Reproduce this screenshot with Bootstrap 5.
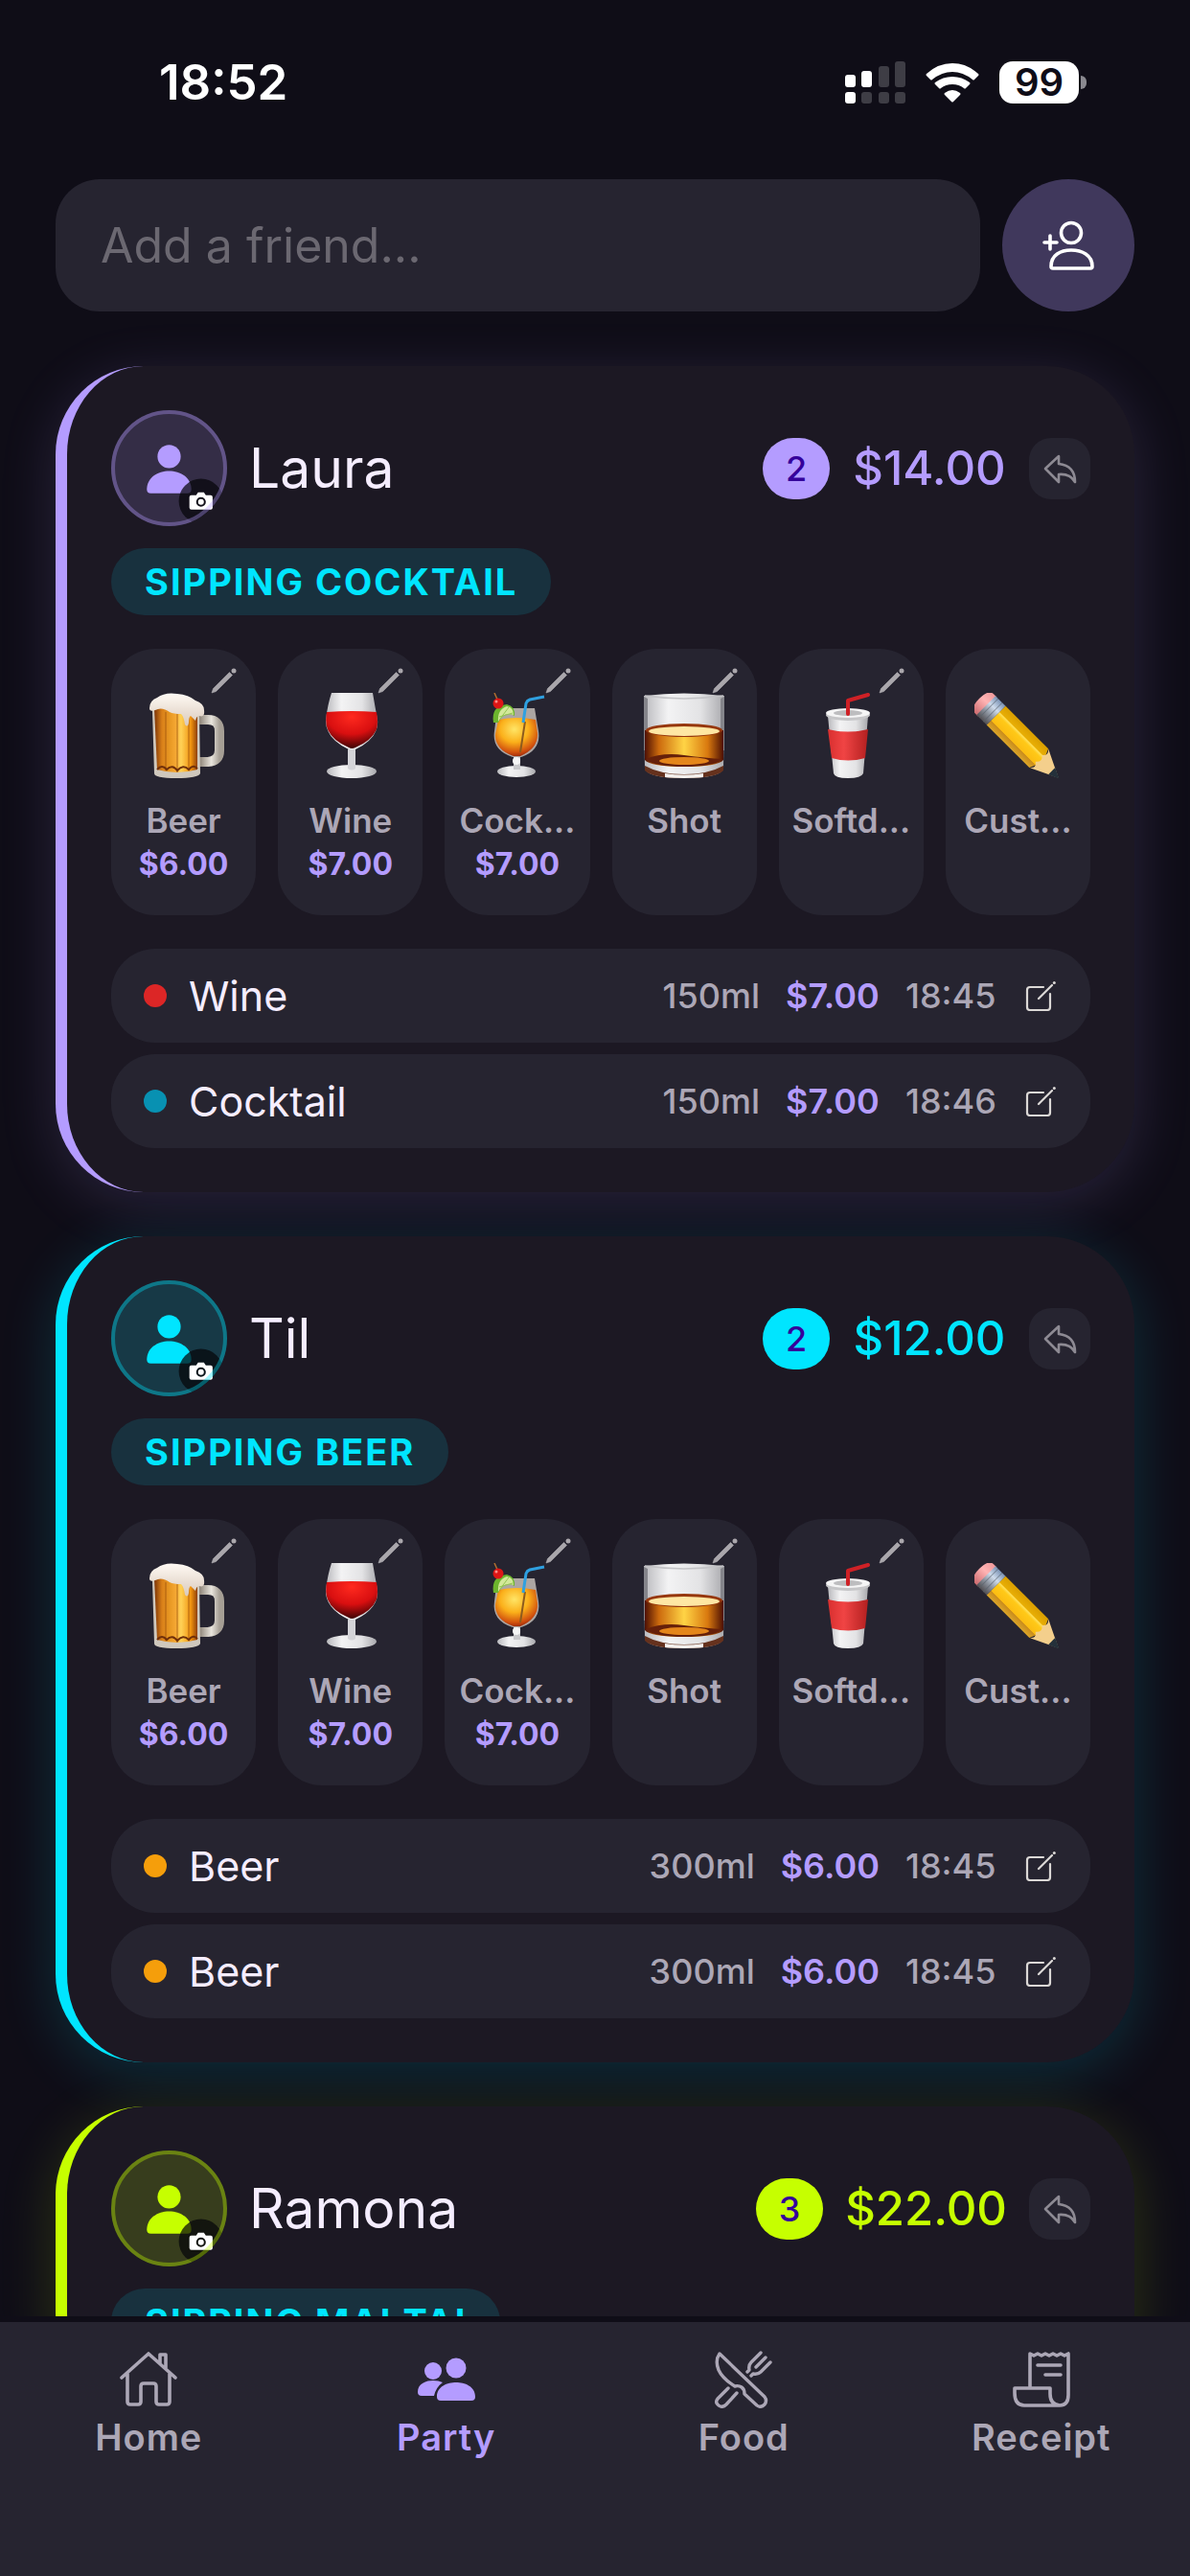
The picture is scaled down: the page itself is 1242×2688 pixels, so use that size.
<!DOCTYPE html>
<html lang="en">
<head>
<meta charset="utf-8">
<meta name="viewport" content="width=device-width, initial-scale=1">
<title>Party</title>
<link rel="stylesheet" href="https://cdn.jsdelivr.net/npm/bootstrap@5.3.0/dist/css/bootstrap.min.css">
<style>
:root{--page:#0f0d17;--surface:#1c1823;--raised:#262430;--muted:#aca7b6;--bright:#f5edff;--violet:#b49cff;--cyan:#00e5ff;--lime:#c6ff00}
body{background:var(--page);color:var(--bright);font-family:Inter,"Noto Sans",sans-serif}
svg{display:block;flex:none}
.app-status{padding:54px 108px 22px 166px;color:#fff}
.clock{font-size:51px;line-height:64px;font-weight:600}
.status-icons{gap:21px}
.battery{width:83px;height:44px;border-radius:14px;background:#fff;color:var(--page);font-size:40px;line-height:44px;font-weight:600;text-align:center}
.battery-cap{width:6px;height:14px;margin-left:2px;border-radius:0 6px 6px 0;background:#8a8990}
.app-main{padding:47px 58px 0;min-height:0}
.gap-m{gap:23px}
.gap-s{gap:12px}
.friend-input,.friend-input:focus{height:138px;border:0;border-radius:46px;padding:0 47px;background:var(--raised);color:var(--bright);font-size:50px;box-shadow:none}
.friend-input::placeholder{color:#6b6871;opacity:1}
.add-btn{width:138px;height:138px;background:#40385c;color:#fff;flex:none}
.guest-list{gap:46px;margin-top:57px}
.guest{--accent:var(--violet);--glow:180,156,255;border-left:12px solid var(--accent);border-radius:92px;background:var(--surface);padding:46px;box-shadow:0 12px 60px rgba(var(--glow),.16)}
.guest-cyan{--accent:var(--cyan);--glow:0,229,255}
.guest-lime{--accent:var(--lime);--glow:198,255,0}
.avatar-btn{color:var(--accent);border-radius:50%}
.guest-name{font-size:57px;line-height:64px;font-weight:400;color:var(--bright)}
.count{min-width:70px;height:64px;border-radius:32px;background:var(--accent);color:#35009b;font-size:36px;line-height:64px;font-weight:500;text-align:center}
.total{min-width:162px;font-size:49px;line-height:64px;font-weight:500;color:var(--accent);text-align:center}
.reply-btn{border-radius:23px;background:var(--raised);color:#8d8a93}
.chip-row{margin-top:23px}
.sip-chip{border-radius:35px;padding:0 35px;background:#18313e;color:var(--cyan);font-size:38px;line-height:70px;font-weight:700;letter-spacing:2px;text-transform:uppercase}
.stack{gap:35px;margin-top:35px}
.tile{flex:1 1 0;min-width:0;min-height:278px;border-radius:46px;background:var(--raised);padding-top:46px;color:var(--muted)}
.tile-name{margin-top:20px;font-size:35px;line-height:46px;font-weight:600}
.tile-price{font-size:32px;line-height:46px;font-weight:700;color:var(--violet)}
.tile-edit{top:20px;right:20px;color:#aaa7ac}
.drink{min-height:98px;border-radius:46px;background:var(--raised);padding:0 36px 0 34px;font-size:36px;line-height:46px;font-weight:500;color:var(--muted)}
.drink-name{font-size:43px;font-weight:400;color:var(--bright)}
.spot{width:24px;height:24px;border-radius:50%;flex:none}
.spot-red{background:#dc2626}
.spot-teal{background:#0891b2}
.spot-amber{background:#f59e0b}
.cost{min-width:98px;font-weight:600;color:var(--violet)}
.time-col{min-width:98px}
.drink-meta{gap:27px}
.edit-btn{color:#dbd8d6}
.tab-bar{border-top:6px solid var(--page);background:var(--raised);padding:30px 0 122px}
.tab-link{color:var(--muted);font-size:38px;line-height:46px;font-weight:600;letter-spacing:1px;gap:7px}
.tab-link.active{color:var(--violet)}
</style>
</head>
<body>
<svg class="position-absolute" width="0" height="0" aria-hidden="true">
<defs>
<linearGradient id="gBeer"><stop offset="0" stop-color="#7c3407"/><stop offset=".18" stop-color="#d98019"/><stop offset=".35" stop-color="#e79722"/><stop offset=".5" stop-color="#f5a833"/><stop offset=".62" stop-color="#ffd257"/><stop offset=".85" stop-color="#f0930f"/><stop offset="1" stop-color="#8f3f08"/></linearGradient>
<linearGradient id="gFoam" x2="0" y2="1"><stop offset="0" stop-color="#fffaf4"/><stop offset="1" stop-color="#d9c9bb"/></linearGradient>
<linearGradient id="gHandle"><stop offset="0" stop-color="#8d8377"/><stop offset=".6" stop-color="#e9e5dd"/><stop offset="1" stop-color="#a69f95"/></linearGradient>
<linearGradient id="gGlass"><stop offset="0" stop-color="#b9b9bd"/><stop offset=".3" stop-color="#f3f3f4"/><stop offset=".7" stop-color="#e3e3e5"/><stop offset="1" stop-color="#a9a9ad"/></linearGradient>
<radialGradient id="gWine" cx=".5" cy=".15" r=".85"><stop offset="0" stop-color="#ff2a1f"/><stop offset=".55" stop-color="#d90f10"/><stop offset="1" stop-color="#3d0305"/></radialGradient>
<radialGradient id="gTropic" cx=".45" cy=".3" r=".75"><stop offset="0" stop-color="#ffe566"/><stop offset=".45" stop-color="#fbb01a"/><stop offset=".8" stop-color="#d2520e"/><stop offset="1" stop-color="#8f1d08"/></radialGradient>
<linearGradient id="gWhisky"><stop offset="0" stop-color="#4e1003"/><stop offset=".18" stop-color="#cc6a0d"/><stop offset=".5" stop-color="#ffd445"/><stop offset=".8" stop-color="#d9790f"/><stop offset="1" stop-color="#4e1003"/></linearGradient>
<linearGradient id="gRed"><stop offset="0" stop-color="#d92f2f"/><stop offset=".4" stop-color="#f04444"/><stop offset="1" stop-color="#b32020"/></linearGradient>
<linearGradient id="gWood" x2="0" y2="1"><stop offset="0" stop-color="#d99e00"/><stop offset=".3" stop-color="#e8ae05"/><stop offset=".34" stop-color="#ffe05a"/><stop offset=".44" stop-color="#ffc918"/><stop offset=".75" stop-color="#fcbd12"/><stop offset=".78" stop-color="#c98c1c"/><stop offset="1" stop-color="#dba62a"/></linearGradient>
<linearGradient id="gFerrule" x2="0" y2="1"><stop offset="0" stop-color="#7b93b5"/><stop offset=".35" stop-color="#cfdcec"/><stop offset=".65" stop-color="#8d949f"/><stop offset="1" stop-color="#4f4c50"/></linearGradient>
<linearGradient id="gRubber" x2="0" y2="1"><stop offset="0" stop-color="#f09a9c"/><stop offset=".4" stop-color="#ffb4b4"/><stop offset="1" stop-color="#cc6a6e"/></linearGradient>
<clipPath id="cFace"><circle cx="60" cy="60" r="60"/></clipPath>
</defs>
<symbol id="avatar" viewBox="0 0 120 120">
<circle cx="60" cy="60" r="60" fill="currentColor" fill-opacity=".16"/>
<g fill="currentColor"><circle cx="60" cy="48" r="12"/><path d="M37 82C37 70 48 63 60 63s23 7 23 19q0 4-4 4H41q-4 0-4-4z"/></g>
<circle cx="93" cy="94" r="23" fill="#06060a" fill-opacity=".72" clip-path="url(#cFace)"/>
<path fill="#fff" fill-rule="evenodd" d="M83 88h5l2-3h6l2 3h5q2 0 2 2v11q0 2-2 2H83q-2 0-2-2V90q0-2 2-2zM93 90a5 5 0 1 0 0 10a5 5 0 1 0 0-10zm0 2a3 3 0 1 1 0 6a3 3 0 1 1 0-6z"/>
<circle cx="60" cy="60" r="58" fill="none" stroke="currentColor" stroke-opacity=".36" stroke-width="4"/>
</symbol>
<symbol id="reply" viewBox="0 0 64 64"><path d="M31 19L17 32L31 46V38Q43 37 48 46Q48 29 31 27Z" fill="none" stroke="currentColor" stroke-width="2.6" stroke-linejoin="round"/></symbol>
<symbol id="pen" viewBox="0 0 27 27"><path d="M19.500 4.500L22.500 7.500L5.500 24.500L1 26L2.500 21.500Z" fill="currentColor" stroke="currentColor" stroke-width=".6" stroke-linejoin="round"/><circle cx="24" cy="3" r="2.500" fill="currentColor"/></symbol>
<symbol id="edit" viewBox="0 0 32 32"><path d="M19 7H5Q2 7 2 10V28Q2 31 5 31H23Q26 31 26 28V14M14 19L28 5" fill="none" stroke="currentColor" stroke-width="2.2" stroke-linecap="round"/><circle cx="30.300" cy="2.500" r="1.500" fill="currentColor"/></symbol>
<symbol id="beer" viewBox="0 0 90 90">
<path d="M61 28H70Q82 28 82 40V60Q82 71 70 72H61" fill="none" stroke="url(#gHandle)" stroke-width="10"/>
<path d="M12 18H61L62 84Q60 89 37 89T14 84Z" fill="#cfc8bd"/>
<path d="M14 16H59V80Q37 86 17 80Z" fill="url(#gBeer)"/>
<path d="M26 20V81M38 20V83M50 20V81" stroke="#9a4e08" stroke-opacity=".5" stroke-width="1.500"/>
<path d="M17 80Q22 74 27 80Q33 74 38 81Q44 74 50 80Q55 74 59 79" fill="none" stroke="#70300a" stroke-width="2"/>
<path d="M9 16Q9 8 17 5Q25-1 38 1Q50 2 57 8Q66 11 66 18Q67 26 61 24Q58 24 57 29Q54 26 52 24Q50 25 50 31Q49 37 46 33Q45 25 42 22Q34 22 30 20Q22 14 15 18Q9 20 9 16Z" fill="url(#gFoam)"/>
</symbol>
<symbol id="wine" viewBox="0 0 90 90">
<path d="M25 0H68Q70 12 73 28Q75 47 50 59H43Q18 47 19 28Q21 12 25 0Z" fill="url(#gGlass)"/>
<path d="M20 20Q46 18 72 20Q74 31 72 38Q67 50 50 57Q46 59 43 57Q26 50 21 38Q18 31 20 20Z" fill="url(#gWine)"/>
<ellipse cx="46" cy="82" rx="26" ry="7" fill="url(#gGlass)"/><path d="M42 59H50V79Q46 82 42 79Z" fill="#d4d4d8"/>
</symbol>
<symbol id="cocktail" viewBox="0 0 90 90">
<path d="M24 16H63L67 40Q70 60 49 67H40Q18 60 21 40Z" fill="#d9d2c9" fill-opacity=".75"/>
<path d="M25 28Q45 24 64 28L66 42Q67 58 48 66H41Q21 59 22 43Z" fill="url(#gTropic)"/>
<path d="M48 62L53 30" stroke="#8d5b1d" stroke-width="2"/><path d="M51 31L54 11Q55 8 58 7L73 4" fill="none" stroke="#2fa0e0" stroke-width="3"/>
<path d="M20 31Q17 14 34 12Q43 14 42 24Q32 18 25 31Z" fill="#6cb52d"/><path d="M25 30Q24 17 34 14Q41 15 41 23Q31 19 25 30Z" fill="#d3e89a"/><path d="M27 27L36 15M26 25L40 21" stroke="#93c552" stroke-width="1"/>
<path d="M21 0L25 9" stroke="#b26f30" stroke-width="1.500"/><circle cx="25" cy="11" r="5.500" fill="#dd1616"/><circle cx="23" cy="9" r="1.500" fill="#ff8d87"/>
<ellipse cx="44" cy="82" rx="20" ry="6" fill="url(#gGlass)"/><path d="M41 67H48V80H41Z" fill="#c9c9cc"/><circle cx="44" cy="71" r="4" fill="#f5f5f5"/>
</symbol>
<symbol id="shot" viewBox="0 0 90 90">
<path d="M3 3Q45-2 87 3L86 80Q80 89 45 89T4 80Z" fill="url(#gGlass)"/><path d="M3 4V60H7V6ZM83 6V60H87V4Z" fill="#85858b"/>
<path d="M4 39H86V70Q80 77 45 77T4 70Z" fill="url(#gWhisky)"/><path d="M5 69Q22 62 45 65T85 69Q77 77 45 77T5 69Z" fill="#66200a"/><ellipse cx="45" cy="71" rx="26" ry="4" fill="#e4861b"/>
<ellipse cx="45" cy="39" rx="40" ry="7" fill="#96370d"/><ellipse cx="45" cy="40" rx="37" ry="5" fill="#fee7a4"/>
<path d="M4 76Q20 85 45 85T86 76V81Q78 89 45 89T4 81Z" fill="#65311d"/><path d="M25 84Q45 87 65 84V88Q45 90 25 88Z" fill="#f4f1ef"/><path d="M4 3Q45 9 86 3" fill="none" stroke="#c4c4c7" stroke-width="1.500"/>
</symbol>
<symbol id="soda" viewBox="0 0 90 90">
<path d="M21 24H63L58 84Q56 89 42 89T27 84Z" fill="url(#gGlass)"/><path d="M21 38Q42 43 63 38L60 68Q42 73 25 68Z" fill="url(#gRed)"/>
<ellipse cx="42" cy="23" rx="23" ry="6" fill="#c6c6c8"/><ellipse cx="42" cy="21" rx="23" ry="5" fill="#f5f5f5"/><ellipse cx="42" cy="21" rx="15" ry="3" fill="#bdbdbf"/>
<path d="M42 22V8L63 2" fill="none" stroke="#cf2126" stroke-width="4" stroke-linejoin="round" stroke-linecap="round"/>
</symbol>
<symbol id="pencil" viewBox="0 0 90 90"><g transform="translate(5 6) rotate(45)">
<path d="M12-14H7Q0-14 0 0T7 14H12Z" fill="url(#gRubber)"/><path d="M10-14H25V14H10Z" fill="url(#gFerrule)"/><path d="M14-14V14M20-14V14" stroke="#59606b" stroke-opacity=".6"/>
<path d="M25-14H88L94 0L88 14H25Z" fill="url(#gWood)"/><path d="M88-14L117 0L88 14Q94 9 88 5Q94 0 88-5Q94-9 88-14Z" fill="#f4cf8c"/><path d="M107-5L118 0L107 5Z" fill="#24303a"/></g></symbol>
</svg>

<div class="d-flex flex-column vh-100 overflow-hidden">
<header class="app-status d-flex justify-content-between align-items-center">
<span class="clock">18:52</span>
<div class="status-icons d-flex align-items-center">
<svg width="63" height="44" viewBox="0 0 63 44" role="img" aria-label="Signal"><g fill="#fff"><rect y="14" width="11" height="13" rx="3"/><rect x="17" y="10" width="11" height="17" rx="3"/><rect y="32" width="11" height="12" rx="3"/></g><g fill="#3e3d45"><rect x="35" y="5" width="11" height="22" rx="3"/><rect x="52" width="11" height="27" rx="3"/><rect x="17" y="32" width="11" height="12" rx="3"/><rect x="35" y="32" width="11" height="12" rx="3"/><rect x="52" y="32" width="11" height="12" rx="3"/></g></svg>
<svg width="56" height="42" viewBox="0 0 56 42" role="img" aria-label="Wi-Fi"><path fill="#fff" d="M1 12Q13 1 28 1T55 12Q56 13 55 14L51 18Q50 19 49 18Q39 10 28 10T7 18Q6 19 5 18L1 14Q0 13 1 12zM10 21Q18 15 28 15T46 21Q47 22 46 23L42 27Q41 28 40 27Q35 23 28 23T16 27Q15 28 14 27L10 23Q9 22 10 21zM20 32Q24 29 28 29T36 32Q37 33 36 34L29 41Q28 42 27 41L20 34Q19 33 20 32z"/></svg>
<div class="d-flex align-items-center"><span class="battery">99</span><span class="battery-cap"></span></div>
</div>
</header>

<main class="app-main flex-grow-1 overflow-hidden">
<form class="d-flex gap-m">
<input class="form-control friend-input" type="text" placeholder="Add a friend..." aria-label="Add a friend">
<button class="btn add-btn rounded-circle border-0 p-0 d-flex align-items-center justify-content-center" type="button" aria-label="Add friend"><svg width="54" height="52" viewBox="0 0 54 52" fill="none" stroke="currentColor" stroke-width="3.600" stroke-linecap="round" stroke-linejoin="round"><circle cx="30" cy="13" r="10.500"/><path d="M9 48C9 36 19 31 30 31s22 5 22 17q0 2-2 2H11q-2 0-2-2zM8 16V30M2 23H15"/></svg></button>
</form>

<div class="guest-list d-flex flex-column">
<section class="guest">
<div class="d-flex align-items-center justify-content-between">
<div class="d-flex align-items-center gap-m"><button class="btn avatar-btn border-0 p-0" type="button" aria-label="Change photo of Laura"><svg width="121" height="121"><use href="#avatar"/></svg></button><h2 class="guest-name mb-0">Laura</h2></div>
<div class="d-flex align-items-center gap-m"><span class="count">2</span><span class="total">$14.00</span><button class="btn reply-btn border-0 p-0" type="button" aria-label="Undo"><svg width="64" height="64"><use href="#reply"/></svg></button></div>
</div>
<div class="chip-row d-flex"><span class="sip-chip">Sipping Cocktail</span></div>
<div class="stack d-flex flex-column">
<div class="d-flex gap-m">
<button class="btn tile position-relative border-0 d-flex flex-column align-items-center px-0 pb-0" type="button"><svg width="90" height="90"><use href="#beer"/></svg><span class="tile-name">Beer</span><span class="tile-price">$6.00</span><svg class="tile-edit position-absolute" width="27" height="27"><use href="#pen"/></svg></button>
<button class="btn tile position-relative border-0 d-flex flex-column align-items-center px-0 pb-0" type="button"><svg width="90" height="90"><use href="#wine"/></svg><span class="tile-name">Wine</span><span class="tile-price">$7.00</span><svg class="tile-edit position-absolute" width="27" height="27"><use href="#pen"/></svg></button>
<button class="btn tile position-relative border-0 d-flex flex-column align-items-center px-0 pb-0" type="button"><svg width="90" height="90"><use href="#cocktail"/></svg><span class="tile-name">Cock...</span><span class="tile-price">$7.00</span><svg class="tile-edit position-absolute" width="27" height="27"><use href="#pen"/></svg></button>
<button class="btn tile position-relative border-0 d-flex flex-column align-items-center px-0 pb-0" type="button"><svg width="90" height="90"><use href="#shot"/></svg><span class="tile-name">Shot</span><svg class="tile-edit position-absolute" width="27" height="27"><use href="#pen"/></svg></button>
<button class="btn tile position-relative border-0 d-flex flex-column align-items-center px-0 pb-0" type="button"><svg width="90" height="90"><use href="#soda"/></svg><span class="tile-name">Softd...</span><svg class="tile-edit position-absolute" width="27" height="27"><use href="#pen"/></svg></button>
<button class="btn tile border-0 d-flex flex-column align-items-center px-0 pb-0" type="button"><svg width="90" height="90"><use href="#pencil"/></svg><span class="tile-name">Cust...</span></button>
</div>
<ul class="list-unstyled d-flex flex-column gap-s mb-0">
<li class="drink d-flex align-items-center gap-m"><span class="spot spot-red"></span><span class="drink-name me-auto">Wine</span><div class="drink-meta d-flex align-items-center"><span>150ml</span><span class="cost">$7.00</span><span class="time-col">18:45</span><button class="btn edit-btn border-0 p-0" type="button" aria-label="Edit drink"><svg width="32" height="32"><use href="#edit"/></svg></button></div></li>
<li class="drink d-flex align-items-center gap-m"><span class="spot spot-teal"></span><span class="drink-name me-auto">Cocktail</span><div class="drink-meta d-flex align-items-center"><span>150ml</span><span class="cost">$7.00</span><span class="time-col">18:46</span><button class="btn edit-btn border-0 p-0" type="button" aria-label="Edit drink"><svg width="32" height="32"><use href="#edit"/></svg></button></div></li>
</ul>
</div>
</section>

<section class="guest guest-cyan">
<div class="d-flex align-items-center justify-content-between">
<div class="d-flex align-items-center gap-m"><button class="btn avatar-btn border-0 p-0" type="button" aria-label="Change photo of Til"><svg width="121" height="121"><use href="#avatar"/></svg></button><h2 class="guest-name mb-0">Til</h2></div>
<div class="d-flex align-items-center gap-m"><span class="count">2</span><span class="total">$12.00</span><button class="btn reply-btn border-0 p-0" type="button" aria-label="Undo"><svg width="64" height="64"><use href="#reply"/></svg></button></div>
</div>
<div class="chip-row d-flex"><span class="sip-chip">Sipping Beer</span></div>
<div class="stack d-flex flex-column">
<div class="d-flex gap-m">
<button class="btn tile position-relative border-0 d-flex flex-column align-items-center px-0 pb-0" type="button"><svg width="90" height="90"><use href="#beer"/></svg><span class="tile-name">Beer</span><span class="tile-price">$6.00</span><svg class="tile-edit position-absolute" width="27" height="27"><use href="#pen"/></svg></button>
<button class="btn tile position-relative border-0 d-flex flex-column align-items-center px-0 pb-0" type="button"><svg width="90" height="90"><use href="#wine"/></svg><span class="tile-name">Wine</span><span class="tile-price">$7.00</span><svg class="tile-edit position-absolute" width="27" height="27"><use href="#pen"/></svg></button>
<button class="btn tile position-relative border-0 d-flex flex-column align-items-center px-0 pb-0" type="button"><svg width="90" height="90"><use href="#cocktail"/></svg><span class="tile-name">Cock...</span><span class="tile-price">$7.00</span><svg class="tile-edit position-absolute" width="27" height="27"><use href="#pen"/></svg></button>
<button class="btn tile position-relative border-0 d-flex flex-column align-items-center px-0 pb-0" type="button"><svg width="90" height="90"><use href="#shot"/></svg><span class="tile-name">Shot</span><svg class="tile-edit position-absolute" width="27" height="27"><use href="#pen"/></svg></button>
<button class="btn tile position-relative border-0 d-flex flex-column align-items-center px-0 pb-0" type="button"><svg width="90" height="90"><use href="#soda"/></svg><span class="tile-name">Softd...</span><svg class="tile-edit position-absolute" width="27" height="27"><use href="#pen"/></svg></button>
<button class="btn tile border-0 d-flex flex-column align-items-center px-0 pb-0" type="button"><svg width="90" height="90"><use href="#pencil"/></svg><span class="tile-name">Cust...</span></button>
</div>
<ul class="list-unstyled d-flex flex-column gap-s mb-0">
<li class="drink d-flex align-items-center gap-m"><span class="spot spot-amber"></span><span class="drink-name me-auto">Beer</span><div class="drink-meta d-flex align-items-center"><span>300ml</span><span class="cost">$6.00</span><span class="time-col">18:45</span><button class="btn edit-btn border-0 p-0" type="button" aria-label="Edit drink"><svg width="32" height="32"><use href="#edit"/></svg></button></div></li>
<li class="drink d-flex align-items-center gap-m"><span class="spot spot-amber"></span><span class="drink-name me-auto">Beer</span><div class="drink-meta d-flex align-items-center"><span>300ml</span><span class="cost">$6.00</span><span class="time-col">18:45</span><button class="btn edit-btn border-0 p-0" type="button" aria-label="Edit drink"><svg width="32" height="32"><use href="#edit"/></svg></button></div></li>
</ul>
</div>
</section>

<section class="guest guest-lime">
<div class="d-flex align-items-center justify-content-between">
<div class="d-flex align-items-center gap-m"><button class="btn avatar-btn border-0 p-0" type="button" aria-label="Change photo of Ramona"><svg width="121" height="121"><use href="#avatar"/></svg></button><h2 class="guest-name mb-0">Ramona</h2></div>
<div class="d-flex align-items-center gap-m"><span class="count">3</span><span class="total">$22.00</span><button class="btn reply-btn border-0 p-0" type="button" aria-label="Undo"><svg width="64" height="64"><use href="#reply"/></svg></button></div>
</div>
<div class="chip-row d-flex"><span class="sip-chip">Sipping Mai Tai</span></div>
</section>
</div>
</main>

<nav class="tab-bar flex-shrink-0" aria-label="Main">
<div class="row g-0">
<div class="col"><a href="#home" class="tab-link d-flex flex-column align-items-center text-decoration-none"><svg width="60" height="60" viewBox="0 0 60 60" fill="none" stroke="currentColor" stroke-width="3.600" stroke-linejoin="round" stroke-linecap="round"><path d="M2 28L30 3L58 28M42 13V4H48V18M8 24V53Q8 56 11 56H19Q22 56 22 53V37Q22 34 25 34H35Q38 34 38 37V53Q38 56 41 56H49Q52 56 52 53V24"/></svg><span>Home</span></a></div>
<div class="col"><a href="#party" class="tab-link active d-flex flex-column align-items-center text-decoration-none" aria-current="page"><svg width="60" height="60" viewBox="0 0 60 60" fill="currentColor"><circle cx="16" cy="21" r="9"/><circle cx="40" cy="18" r="10.500"/><path d="M20 48C20 37 31 33 40 33s20 4 20 15q0 4-4 4H24q-4 0-4-4zM0 43C0 34 9 31 16 31q6 0 10 2Q19 38 17 47H4q-4 0-4-4z"/></svg><span>Party</span></a></div>
<div class="col"><a href="#food" class="tab-link d-flex flex-column align-items-center text-decoration-none"><svg width="60" height="60" viewBox="0 0 60 60" fill="none" stroke="currentColor" stroke-width="3.400" stroke-linejoin="round" stroke-linecap="round"><path d="M5 3Q0 10 4 20Q8 29 21 37Q25 36 28 38Q31 40 31 45L44 57Q48 60 52 56Q55 52 52 48ZM14 39L3 50Q0 54 4 57Q8 60 12 56L23 44M48 2L38 12Q35 15 36 20L34 22M53 7L43 17M58 12L48 22Q45 25 40 24L38 26"/></svg><span>Food</span></a></div>
<div class="col"><a href="#receipt" class="tab-link d-flex flex-column align-items-center text-decoration-none"><svg width="60" height="60" viewBox="0 0 60 60" fill="none" stroke="currentColor" stroke-width="3.600" stroke-linejoin="round" stroke-linecap="round"><path d="M18 38V3L22 5L26 3L30 5L34 3L38 5L42 3L46 5L50 3L54 5L58 3V46Q58 57 49 57Q39 56 39 45V39H2V44Q2 57 12 57H49M26 15H50M34 25H50"/></svg><span>Receipt</span></a></div>
</div>
</nav>
</div>
<script src="https://cdn.jsdelivr.net/npm/bootstrap@5.3.0/dist/js/bootstrap.bundle.min.js"></script>
</body>
</html>
